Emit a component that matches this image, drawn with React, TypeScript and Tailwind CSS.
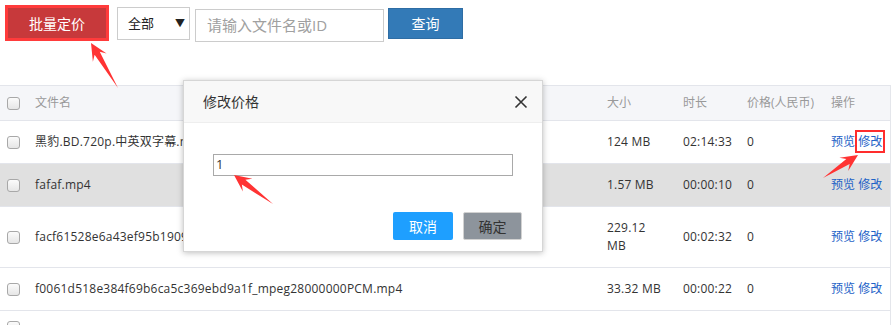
import React from "react";

const FONT = { fontFamily: '"Open Sans", "Noto Sans CJK SC", sans-serif' };

function Arrow({ tail, tip, head = 17, hw = 8, sw = 3 }: { tail: [number, number]; tip: [number, number]; head?: number; hw?: number; sw?: number }) {
  const dx = tip[0] - tail[0];
  const dy = tip[1] - tail[1];
  const len = Math.hypot(dx, dy);
  const ux = dx / len, uy = dy / len;
  const px = -uy, py = ux;
  const bx = tip[0] - ux * head, by = tip[1] - uy * head;
  const nx = tip[0] - ux * (head - 5), ny = tip[1] - uy * (head - 5);
  const pts = [
    [tail[0], tail[1]],
    [nx + px * sw, ny + py * sw],
    [bx + px * hw, by + py * hw],
    [tip[0], tip[1]],
    [bx - px * hw, by - py * hw],
    [nx - px * sw, ny - py * sw],
  ]
    .map((p) => p.join(","))
    .join(" ");
  return <polygon points={pts} fill="#ff3333" />;
}

function Checkbox() {
  return <div className="w-[13px] h-[13px] rounded-[3px] border border-[#a8a8a8] bg-gradient-to-b from-[#fbfbfb] to-[#e6e6e6]" />;
}

type Row = { name: string; size: React.ReactNode; dur: string; price: string; hover?: boolean; tall?: boolean };

const rows: Row[] = [
  { name: "黑豹.BD.720p.中英双字幕.mp4", size: "124 MB", dur: "02:14:33", price: "0" },
  { name: "fafaf.mp4", size: "1.57 MB", dur: "00:00:10", price: "0", hover: true },
  { name: "facf61528e6a43ef95b1909c3f1b2d07.mp4", size: "229.12 MB", dur: "00:02:32", price: "0", tall: true },
  { name: "f0061d518e384f69b6ca5c369ebd9a1f_mpeg28000000PCM.mp4", size: "33.32 MB", dur: "00:00:22", price: "0" },
];

export default function App() {
  return (
    <div className="relative w-[892px] h-[325px] overflow-hidden bg-white text-[12px] text-[#333]" style={FONT}>
      {/* toolbar */}
      <div className="flex items-start pt-[5px] pl-[5px]">
        <div className="w-[104px] h-[36px] border-[3px] border-[#ff3b3b] bg-[#c7393b] text-white text-[14px] flex items-center justify-center">
          批量定价
        </div>
        <div className="ml-[8px] mt-[2px] w-[73px] h-[33px] border border-[#cccccc] flex items-center justify-between pl-[10px] pr-[4px] text-[13px] text-[#222]">
          <span>全部</span>
          <span className="text-[10px] text-[#222]">▼</span>
        </div>
        <div className="ml-[5px] mt-[4px] w-[189px] h-[33px] border border-[#cccccc] flex items-center pl-[11px] text-[15px] text-[#a0a0a0]">
          请输入文件名或ID
        </div>
        <div className="ml-[4px] mt-[3px] w-[75px] h-[31px] border border-[#2e6da4] bg-[#337ab7] text-white text-[14px] flex items-center justify-center">
          查询
        </div>
      </div>

      {/* table */}
      <div className="mt-[43px] w-[891px] border-r border-[#e4e6eb]">
        <div className="flex items-center h-[36px] bg-[#f5f6f9] border-t border-b border-[#e3e5eb] text-[#999]">
          <div className="w-[28px] pl-[7px]"><Checkbox /></div>
          <div className="w-[572px] pl-[7px]">文件名</div>
          <div className="w-[76px] pl-[7px]">大小</div>
          <div className="w-[64px] pl-[7px]">时长</div>
          <div className="w-[84px] pl-[7px]">价格(人民币)</div>
          <div className="flex-1 pl-[7px]">操作</div>
        </div>
        {rows.map((r, i) => (
          <div key={i} className={`flex items-center py-[12px] leading-[18px] border-b border-[#e3e5eb] ${r.hover ? "bg-[#e0e0e0]" : "bg-white"} ${r.tall ? "min-h-[60px]" : "min-h-[43px]"}`}>
            <div className="w-[28px] pl-[7px]"><Checkbox /></div>
            <div className="w-[572px] pl-[7px] whitespace-nowrap overflow-hidden tracking-[0.22px]">{r.name}</div>
            <div className="w-[76px] pl-[7px] pr-[13px] tracking-[0.2px]">{r.size}</div>
            <div className="w-[64px] pl-[7px] tracking-[0.2px]">{r.dur}</div>
            <div className="w-[84px] pl-[7px]">{r.price}</div>
            <div className="flex-1 pl-[7px] text-[#1d62c7] whitespace-nowrap">
              预览{" "}
              <span className={i === 0 ? "outline-2 outline-solid outline-[#ff2d2d] outline-offset-[1px]" : ""}>修改</span>
            </div>
          </div>
        ))}
        <div className="flex items-start pt-[10px] h-[43px] bg-white">
          <div className="w-[28px] pl-[7px]"><Checkbox /></div>
        </div>
      </div>

      {/* modal */}
      <div className="absolute left-[183px] top-[80px] w-[360px] h-[172px] bg-white border border-[#d6d6d6] shadow-[0_1px_6px_rgba(0,0,0,0.25)]">
        <div className="h-[42px] bg-[#f8f8f8] border-b border-[#eeeeee] flex items-center justify-between pl-[19px] pr-[14px]">
          <span className="text-[14px] text-[#333]">修改价格</span>
          <svg width="14" height="14" viewBox="0 0 14 14">
            <path d="M1.5 1.5 L12.5 12.5 M12.5 1.5 L1.5 12.5" stroke="#333" strokeWidth="1.6" />
          </svg>
        </div>
        <div className="pl-[29px] pt-[31px]">
          <div className="w-[300px] h-[22px] border border-[#a9a9a9] flex items-center pl-[2px] text-[13px] text-[#333]">1</div>
        </div>
        <div className="flex justify-end gap-[10px] pr-[20px] mt-[36px]">
          <div className="w-[60px] h-[28px] rounded-[2px] bg-[#1e9fff] text-white text-[14px] flex items-center justify-center">取消</div>
          <div className="w-[59px] h-[28px] rounded-[2px] bg-[#8d949c] border border-[#d2d2d2] text-[#333] text-[14px] flex items-center justify-center">确定</div>
        </div>
      </div>

      {/* annotation arrows */}
      <svg className="absolute left-0 top-0 pointer-events-none" width="892" height="325">
        <Arrow tail={[118, 88]} tip={[91, 43]} />
        <Arrow tail={[273, 204]} tip={[234, 175]} />
        <Arrow tail={[823, 178]} tip={[858, 155]} />
      </svg>
    </div>
  );
}
